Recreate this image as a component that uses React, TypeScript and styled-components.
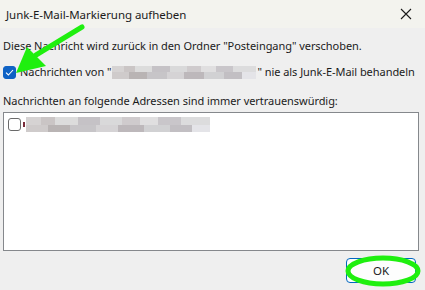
import React from "react";
import styled, { createGlobalStyle } from "styled-components";

const GlobalStyle = createGlobalStyle`
  html, body {
    margin: 0;
    padding: 0;
    background: #efefef;
  }
  * {
    box-sizing: border-box;
  }
`;

export default function App() {
  return (
    <Window>
      <GlobalStyle />
      <TitleBar>
        <Title>Junk-E-Mail-Markierung aufheben</Title>
        <CloseButton aria-label="Schließen">
          <svg width="12" height="12" viewBox="0 0 12 12">
            <path d="M1 1 L11 11 M11 1 L1 11" stroke="#1a1a1a" strokeWidth="1.1" />
          </svg>
        </CloseButton>
      </TitleBar>
      <Body>
        <Line>Diese Nachricht wird zurück in den Ordner "Posteingang" verschoben.</Line>
        <CheckRow>
          <Check checked>
            <svg width="9" height="7" viewBox="0 0 9 7">
              <path d="M1 3.6 L3.4 6 L8 1" stroke="#fff" strokeWidth="1.1" fill="none" />
            </svg>
          </Check>
          <Line>
            Nachrichten von "<Redacted width={144} />" nie als Junk-E-Mail behandeln
          </Line>
        </CheckRow>
        <Label>Nachrichten an folgende Adressen sind immer vertrauenswürdig:</Label>
        <ListBox>
          <ListItem>
            <Check />
            <Dot />
            <Redacted width={184} tall />
          </ListItem>
        </ListBox>
        <Footer>
          <OkButton>OK</OkButton>
        </Footer>
      </Body>
      <Annotation width="425" height="290" viewBox="0 0 425 290">
        <path d="M82 27 L36 55" stroke="#1fef0f" strokeWidth="5" strokeLinecap="round" />
        <path d="M16 73 L27 47 L46 66 Z" fill="#1fef0f" />
        <ellipse cx="383" cy="271" rx="35" ry="13" fill="none" stroke="#1fef0f" strokeWidth="5" />
      </Annotation>
    </Window>
  );
}

const Window = styled.div`
  position: relative;
  width: 425px;
  height: 290px;
  background: #efefef;
  font-family: "Noto Sans", "Open Sans", sans-serif;
  font-size: 11px;
  letter-spacing: -0.05px;
  color: #1b1b1b;
  overflow: hidden;
`;

const TitleBar = styled.div`
  height: 28px;
  background: #f3f3ee;
  display: flex;
  align-items: center;
  justify-content: space-between;
  padding: 0 13px 0 6px;
`;

const Title = styled.div`
  font-size: 11.5px;
  color: #1b1b1b;
`;

const CloseButton = styled.div`
  display: flex;
  align-items: center;
  justify-content: center;
`;

const Body = styled.div`
  padding: 10px 3px 0 3px;
  display: flex;
  flex-direction: column;
`;

const Line = styled.div`
  line-height: 16px;
  white-space: nowrap;
  display: flex;
  align-items: center;
`;

const CheckRow = styled.div`
  display: flex;
  align-items: center;
  gap: 4px;
  margin-top: 10px;
`;

const Check = styled.div<{ checked?: boolean }>`
  width: 13px;
  height: 13px;
  border-radius: 3px;
  flex-shrink: 0;
  display: flex;
  align-items: center;
  justify-content: center;
  background: ${(p) => (p.checked ? "#0f62c5" : "#fff")};
  border: 1px solid ${(p) => (p.checked ? "#0f62c5" : "#6a6a6a")};
`;

const Redacted = styled.span<{ width: number; tall?: boolean }>`
  display: inline-block;
  width: ${(p) => p.width}px;
  height: ${(p) => (p.tall ? 15 : 13)}px;
  margin: 0 1px;
  background:
    linear-gradient(
      90deg,
      #d6d3d3 0 8%,
      #cac5c5 8% 16%,
      #dcdcdc 16% 28%,
      #c5c2c6 28% 40%,
      #d9d9da 40% 52%,
      #cfcbcd 52% 62%,
      #e0dfe0 62% 72%,
      #c9c6ca 72% 84%,
      #dcdcdd 84% 100%
    );
  position: relative;
  &::after {
    content: "";
    position: absolute;
    left: 0;
    right: 0;
    bottom: 0;
    height: 50%;
    background: linear-gradient(
      90deg,
      #cfcbcb 0 12%,
      #b9b4b4 12% 24%,
      #c7c5c8 24% 38%,
      #d5d3d5 38% 50%,
      #bdb8bb 50% 64%,
      #d1d1d3 64% 78%,
      #c2bfc3 78% 90%,
      #e4e4e8 90% 100%
    );
  }
`;

const Label = styled.div`
  margin-top: 13px;
  line-height: 16px;
  white-space: nowrap;
`;

const ListBox = styled.div`
  margin-top: 3px;
  width: 416px;
  height: 139px;
  background: #fff;
  border: 1px solid #85888c;
  padding: 4px 4px;
`;

const ListItem = styled.div`
  display: flex;
  align-items: center;
`;

const Dot = styled.span`
  width: 2px;
  height: 5px;
  margin: 0 0 0 2px;
  background: #7a2b3a;
`;

const Footer = styled.div`
  display: flex;
  justify-content: flex-end;
  padding: 7px 6px 0 0;
`;

const OkButton = styled.button`
  width: 70px;
  height: 25px;
  background: #fdfdfd;
  border: 1px solid #0067c0;
  border-radius: 4px;
  font-family: "Noto Sans", "Open Sans", sans-serif;
  font-size: 11.5px;
  color: #1b1b1b;
`;

const Annotation = styled.svg`
  position: absolute;
  left: 0;
  top: 0;
  pointer-events: none;
`;
